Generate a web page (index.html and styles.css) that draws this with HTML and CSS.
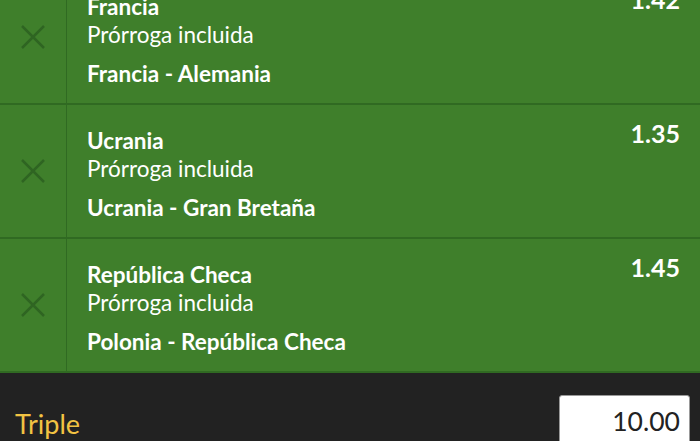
FILE: index.html
```html
<!DOCTYPE html>
<html lang="es">
<head>
  <meta charset="UTF-8" />
  <meta name="viewport" content="width=device-width, initial-scale=1.0"/>
  <title>Boleto</title>
  <link rel="stylesheet" href="styles.css">
</head>
<body>
  <div class="slip">
    <div class="bet">
      <div class="remove">
        <svg width="24" height="24" viewBox="0 0 24 24"><path d="M1 1 L23 23 M23 1 L1 23" /></svg>
      </div>
      <div class="info">
        <div class="pick">Francia</div>
        <div class="market">Prórroga incluida</div>
        <div class="match">Francia - Alemania</div>
      </div>
      <div class="odds">1.42</div>
    </div>

    <div class="bet">
      <div class="remove">
        <svg width="24" height="24" viewBox="0 0 24 24"><path d="M1 1 L23 23 M23 1 L1 23" /></svg>
      </div>
      <div class="info">
        <div class="pick">Ucrania</div>
        <div class="market">Prórroga incluida</div>
        <div class="match">Ucrania - Gran Bretaña</div>
      </div>
      <div class="odds">1.35</div>
    </div>

    <div class="bet">
      <div class="remove">
        <svg width="24" height="24" viewBox="0 0 24 24"><path d="M1 1 L23 23 M23 1 L1 23" /></svg>
      </div>
      <div class="info">
        <div class="pick">República Checa</div>
        <div class="market">Prórroga incluida</div>
        <div class="match">Polonia - República Checa</div>
      </div>
      <div class="odds">1.45</div>
    </div>
  </div>

  <div class="stake">
    <span class="stake-label">Triple</span>
    <input class="stake-input" type="text" value="10.00" />
  </div>
</body>
</html>
```

FILE: styles.css
```css
body {
  margin: 0;
  font-family: Lato, "Open Sans", sans-serif;
  background-color: #222222;
  overflow: hidden;
}

.slip {
  margin-top: -29px;
  background-color: #3f7f2b;
}

.bet {
  display: flex;
  border-bottom: 2px solid #306a22;
  height: 132px;
}

.remove {
  width: 66px;
  flex-shrink: 0;
  border-right: 1px solid #306a22;
  display: flex;
  align-items: center;
  justify-content: center;
}

.remove svg path {
  stroke: #2f6522;
  stroke-width: 2.5;
  fill: none;
}

.info {
  flex: 1;
  padding: 22px 0 0 20px;
  color: white;
  font-size: 22.5px;
  line-height: 28px;
}

.pick {
  font-weight: bold;
}

.match {
  font-weight: bold;
  margin-top: 11px;
}

.odds {
  padding: 14px 20px 0 0;
  color: white;
  font-weight: bold;
  font-size: 25px;
  line-height: 28px;
}

.stake {
  display: flex;
  justify-content: space-between;
  align-items: flex-start;
  padding: 22px 10px 0 15px;
}

.stake-label {
  color: #f2c343;
  font-size: 27px;
  line-height: 32px;
  margin-top: 13px;
}

.stake-input {
  width: 111px;
  height: 50px;
  padding: 0 9px;
  border: 1px solid #999;
  border-radius: 3px;
  font-family: Lato, "Open Sans", sans-serif;
  font-size: 26.5px;
  color: #222;
  text-align: right;
  box-sizing: content-box;
}
```
